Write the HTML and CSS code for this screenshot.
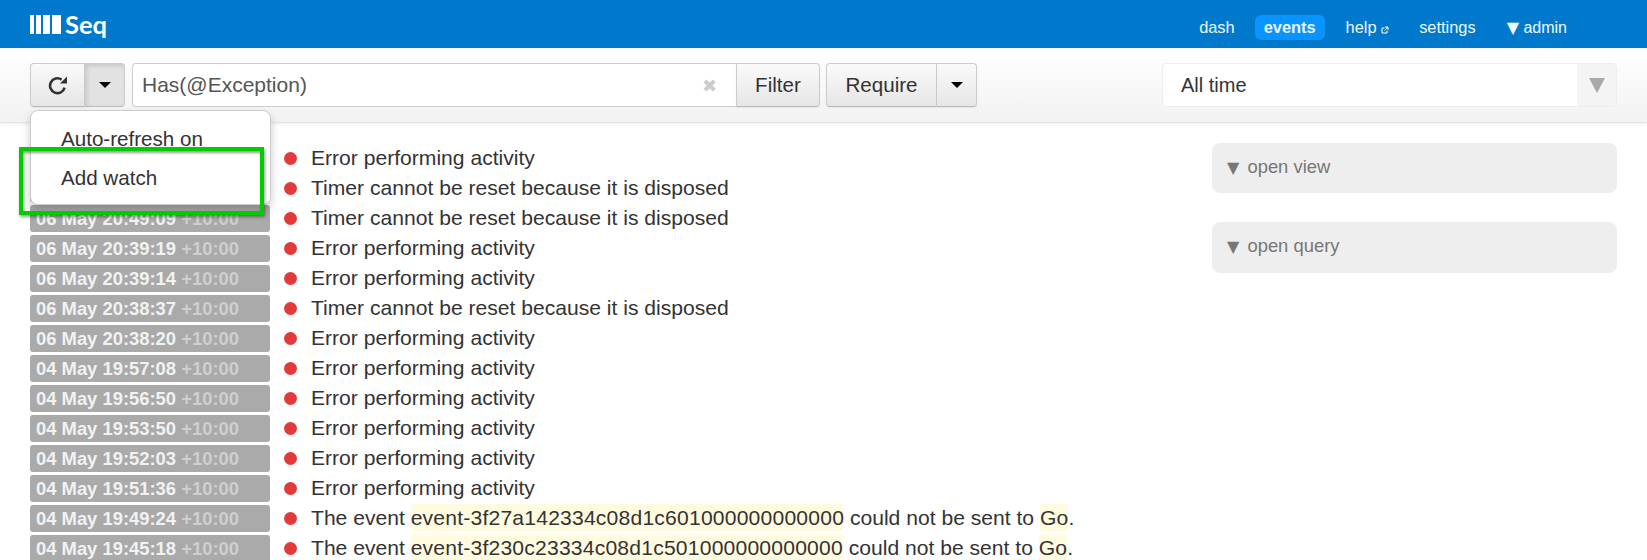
FILE: index.html
```html
<!DOCTYPE html>
<html lang="en">
<head>
<meta charset="utf-8">
<title>Seq</title>
<link rel="stylesheet" href="styles.css">
</head>
<body>
<header class="topbar">
  <div class="logo"><span class="logo-bars"><i class="b1"></i><i class="b2"></i><i class="b3"></i><i class="b4"></i></span><span class="logo-text">Seq</span></div>
  <nav class="nav">
    <a class="nav-item">dash</a>
    <a class="nav-item active">events</a>
    <a class="nav-item help">help <svg class="ext" viewBox="0 0 8 8" width="8" height="8"><path d="M6 4.5V7H1V2h2.5M4 1h3v3M7 1 3.5 4.5" fill="none" stroke="#fff" stroke-width="1"/></svg></a>
    <a class="nav-item">settings</a>
    <a class="nav-item admin"><span class="arrow">▼</span> admin</a>
  </nav>
</header>
<section class="toolbar">
  <div class="btn-group">
    <button class="btn refresh"><svg viewBox="0 0 20 20" width="20" height="20"><path d="M16.6 12.6A7.4 7.4 0 1 1 13.6 4.6" fill="none" stroke="#333" stroke-width="2.6"/><path d="M19 1.6v7h-7z" fill="#333"/></svg></button>
    <button class="btn caret-btn pressed"><span class="caret"></span></button>
  </div>
  <div class="search">
    <div class="search-input"><span class="query">Has(@Exception)</span><span class="clear">✖</span></div>
    <button class="btn filter">Filter</button>
  </div>
  <div class="btn-group">
    <button class="btn require">Require</button>
    <button class="btn caret-btn"><span class="caret"></span></button>
  </div>
  <div class="range"><span class="range-text">All time</span><span class="range-arrow"><span class="tri"></span></span></div>
</section>
<main class="content">
  <div class="events">
    <div class="row"><span class="stamp"></span><span class="dot"></span><span class="msg">Error performing activity</span></div>
    <div class="row"><span class="stamp"></span><span class="dot"></span><span class="msg">Timer cannot be reset because it is disposed</span></div>
    <div class="row"><span class="stamp">06 May 20:49:09 <em>+10:00</em></span><span class="dot"></span><span class="msg">Timer cannot be reset because it is disposed</span></div>
    <div class="row"><span class="stamp">06 May 20:39:19 <em>+10:00</em></span><span class="dot"></span><span class="msg">Error performing activity</span></div>
    <div class="row"><span class="stamp">06 May 20:39:14 <em>+10:00</em></span><span class="dot"></span><span class="msg">Error performing activity</span></div>
    <div class="row"><span class="stamp">06 May 20:38:37 <em>+10:00</em></span><span class="dot"></span><span class="msg">Timer cannot be reset because it is disposed</span></div>
    <div class="row"><span class="stamp">06 May 20:38:20 <em>+10:00</em></span><span class="dot"></span><span class="msg">Error performing activity</span></div>
    <div class="row"><span class="stamp">04 May 19:57:08 <em>+10:00</em></span><span class="dot"></span><span class="msg">Error performing activity</span></div>
    <div class="row"><span class="stamp">04 May 19:56:50 <em>+10:00</em></span><span class="dot"></span><span class="msg">Error performing activity</span></div>
    <div class="row"><span class="stamp">04 May 19:53:50 <em>+10:00</em></span><span class="dot"></span><span class="msg">Error performing activity</span></div>
    <div class="row"><span class="stamp">04 May 19:52:03 <em>+10:00</em></span><span class="dot"></span><span class="msg">Error performing activity</span></div>
    <div class="row"><span class="stamp">04 May 19:51:36 <em>+10:00</em></span><span class="dot"></span><span class="msg">Error performing activity</span></div>
    <div class="row"><span class="stamp">04 May 19:49:24 <em>+10:00</em></span><span class="dot"></span><span class="msg">The event <mark>event-3f27a142334c08d1c601000000000000</mark> could not be sent to <mark>Go</mark>.</span></div>
    <div class="row"><span class="stamp">04 May 19:45:18 <em>+10:00</em></span><span class="dot"></span><span class="msg">The event <mark>event-3f230c23334c08d1c501000000000000</mark> could not be sent to <mark>Go</mark>.</span></div>
  </div>
  <aside class="side">
    <div class="panel view"><span class="arrow">▼</span> open view</div>
    <div class="panel query-panel"><span class="arrow">▼</span> open query</div>
  </aside>
</main>
<div class="menu">
  <div class="menu-item">Auto-refresh on</div>
  <div class="menu-item">Add watch</div>
</div>
<div class="callout"></div>
</body>
</html>
```
FILE: styles.css
```css
* { box-sizing: border-box; }
html, body { margin: 0; padding: 0; height: 560px; overflow: hidden; background: #fff; }
body { font-family: "Liberation Sans", Arial, sans-serif; color: #333; position: relative; }

.topbar { height: 48px; background: #0079cd; display: flex; align-items: center; justify-content: space-between; padding: 0 71px 0 30px; color: #fff; }
.logo { display: flex; align-items: center; height: 48px; }
.logo-bars { display: flex; gap: 2px; height: 19px; margin-right: 4px; }
.logo-bars i { display: block; background: #fff; height: 19px; }
.logo-bars .b1 { width: 4px; }
.logo-bars .b2 { width: 5px; }
.logo-bars .b3 { width: 7px; }
.logo-bars .b4 { width: 9px; }
.logo-text { font-family: Lato, "Liberation Sans", sans-serif; font-size: 25.5px; font-weight: 700; line-height: 48px; }
.nav { display: flex; align-items: center; font-size: 16.4px; margin-top: 6px; }
.nav-item { color: #f0f8ff; padding: 0 9px; height: 25px; line-height: 25px; border-radius: 6px; white-space: nowrap; }
.nav-item.active { background: #0a94ff; color: #e8f4ff; font-weight: 700; margin-left: 11px; }
.nav-item.help { margin-left: 12px; }
.nav-item.help + .nav-item { margin-left: 12px; }
.nav-item.admin { margin-left: 13px; font-size: 16px; }
.ext { vertical-align: -1px; }
.arrow { font-family: "DejaVu Sans", sans-serif; font-size: 16px; }

.toolbar { height: 75px; background: linear-gradient(#fff, #f2f2f2); border-bottom: 1px solid #e6e6e6; box-shadow: 0 1px 3px rgba(0,0,0,.08); display: flex; align-items: flex-start; padding: 15px 0 0 30px; }
.btn-group { display: flex; height: 44px; }
.btn { height: 44px; border: 1px solid #ccc; border-bottom-color: #b8b8b8; background: linear-gradient(#fafafa, #e6e6e6); font: 20.6px "Liberation Sans", Arial, sans-serif; color: #333; padding: 0; display: flex; align-items: center; justify-content: center; box-shadow: 0 1px 2px rgba(0,0,0,.06); }
.refresh { width: 55px; border-radius: 4px 0 0 4px; }
.caret-btn { width: 40px; border-left: 0; border-radius: 0 4px 4px 0; }
.caret-btn.pressed { background: #e2e2e2; box-shadow: inset 2px 2px 4px rgba(0,0,0,.12); }
.caret { width: 0; height: 0; border-left: 6px solid transparent; border-right: 6px solid transparent; border-top: 6px solid #000; }
.search { display: flex; height: 44px; margin-left: 7px; }
.search-input { width: 604px; height: 44px; background: #fff; border: 1px solid #ccc; border-right: 0; border-radius: 4px 0 0 4px; display: flex; align-items: center; justify-content: space-between; padding: 0 19px 0 9px; font-size: 21px; color: #555; }
.clear { color: #ccc; font-size: 18px; font-family: "DejaVu Sans", sans-serif; }
.filter { width: 84px; border-radius: 0 4px 4px 0; }
.require { width: 111px; border-radius: 4px 0 0 4px; margin-left: 6px; }
.range { width: 455px; height: 44px; margin-left: 185px; background: #fff; border: 1px solid #eee; border-radius: 4px; display: flex; align-items: center; justify-content: space-between; font-size: 20px; padding-left: 18px; }
.range-arrow { width: 39px; height: 42px; background: #f4f4f4; display: flex; align-items: center; justify-content: center; }
.tri { width: 0; height: 0; border-left: 8px solid transparent; border-right: 8px solid transparent; border-top: 15px solid #aaa; }

.content { display: flex; justify-content: space-between; padding: 20px 30px 0 30px; }
.events { display: flex; flex-direction: column; }
.row { display: flex; align-items: center; height: 30px; font-size: 21.1px; white-space: nowrap; }
.stamp { width: 240px; height: 27px; line-height: 27px; background: #aaa; border-radius: 3px; color: #f2f2f2; font-size: 18.4px; font-weight: 700; padding-left: 6px; }
.stamp em { font-style: normal; color: #cfcfcf; }
.dot { width: 13px; height: 13px; border-radius: 50%; background: #e03a3a; margin: 0 14px 0 14px; }
.msg { color: #333; }
mark { background: #fffbe0; color: #333; border-radius: 3px; padding: 2px 0; letter-spacing: .2px; }

.side { width: 405px; }
.panel { background: #eee; border-radius: 8px; color: #777; font-size: 18.4px; height: 50px; padding: 13px 15px; white-space: nowrap; }
.panel .arrow { font-size: 16px; margin-right: 3px; }
.panel.query-panel { margin-top: 29px; height: 51px; }

.menu { position: absolute; left: 30px; top: 110px; width: 241px; height: 95px; background: #fff; border: 1px solid #ccc; border-radius: 8px; box-shadow: 0 5px 10px rgba(0,0,0,.2); padding: 13px 0 0; font-size: 20.6px; }
.menu-item { height: 39px; line-height: 30px; padding-left: 30px; color: #333; white-space: nowrap; }
.callout { position: absolute; left: 19px; top: 147px; width: 245px; height: 68px; border: 4px solid #0c0; box-shadow: 1px 2px 3px rgba(0,0,0,.4), inset 1px 2px 3px rgba(0,0,0,.4); }
```
